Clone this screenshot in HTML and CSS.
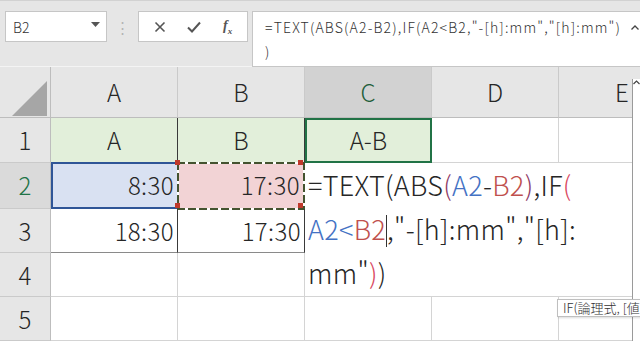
FILE: index.html
```html
<!doctype html>
<html lang="ja">
<head>
  <meta charset="UTF-8">
  <title>Excel TEXT ABS</title>
  <link rel="stylesheet" href="styles.css">
</head>
<body>
  <div class="app">
    <div class="toolbar">
      <div class="namebox">
        <span>B2</span>
        <svg class="drop" width="9" height="5" viewBox="0 0 9 5"><path d="M0 0H9L4.5 5Z" fill="#555"/></svg>
      </div>
      <div class="grip">⋮</div>
      <div class="btnbox">
        <svg class="ico" width="12" height="12" viewBox="0 0 12 12"><path d="M1.5 1.5L10.5 10.5M10.5 1.5L1.5 10.5" stroke="#555" stroke-width="1.6"/></svg>
        <svg class="ico" width="14" height="12" viewBox="0 0 14 12"><path d="M1 6.5L5 10.5L13 1.5" stroke="#555" stroke-width="2" fill="none"/></svg>
        <span class="fx"><i>f</i><sub>x</sub></span>
      </div>
      <div class="formula">
        <div>=TEXT(ABS(A2-B2),IF(A2&lt;B2,"-[h]:mm","[h]:mm")</div>
        <div>)</div>
        <svg class="caret" width="8" height="5" viewBox="0 0 8 5"><path d="M0.5 4.5L4 1L7.5 4.5" stroke="#444" stroke-width="1.3" fill="none"/></svg>
      </div>
    </div>

    <div class="sheet">
      <div class="corner"><svg width="35" height="35" viewBox="0 0 35 35"><path d="M35 0V35H0Z" fill="#a6a6a6"/></svg></div>
      <div class="colhead">A</div>
      <div class="colhead">B</div>
      <div class="colhead sel">C</div>
      <div class="colhead">D</div>
      <div class="colhead">E</div>

      <div class="rowhead">1</div>
      <div class="cell head tb">A</div>
      <div class="cell head tb">B</div>
      <div class="cell head tb active">A-B</div>
      <div class="cell"></div>
      <div class="cell"></div>

      <div class="rowhead sel">2</div>
      <div class="cell num tb ref-a">8:30</div>
      <div class="cell num tb ref-b">17:30<i class="ants"></i></div>
      <div class="editor">
        <div>=TEXT(ABS<span class="p">(</span><span class="a">A2</span>-<span class="b">B2</span><span class="p">)</span>,IF<span class="r">(</span></div>
        <div><span class="a">A2&lt;</span><span class="b">B2</span><span class="cur"></span>,"-[h]:mm","[h]:</div>
        <div>mm"<span class="r">)</span>)</div>
      </div>

      <div class="rowhead">3</div>
      <div class="cell num tb">18:30</div>
      <div class="cell num tb">17:30</div>

      <div class="rowhead">4</div>
      <div class="cell"></div>
      <div class="cell"></div>

      <div class="rowhead">5</div>
      <div class="cell"></div>
      <div class="cell"></div>
      <div class="cell"></div>
      <div class="cell"></div>
      <div class="cell"></div>

      <div class="vbar"><svg width="7" height="5" viewBox="0 0 7 5"><path d="M0.5 4L3.5 1L6.5 4" stroke="#444" stroke-width="1.2" fill="none"/></svg></div>
      <div class="tip">IF(論理式, [値が真の場合]</div>
    </div>
  </div>
</body>
</html>
```

FILE: styles.css
```css
*{
  box-sizing: border-box;
}
body{
  margin: 0;
  width: 640px;
  height: 343px;
  overflow: hidden;
  background: #ffffff;
  font-family: "Noto Sans CJK JP", "Noto Sans", sans-serif;
  font-weight: 300;
  color: #262626;
}
.app{
  width: 640px;
  height: 343px;
  overflow: hidden;
}

/* ---------- top bar ---------- */
.toolbar{
  height: 67px;
  background: #e6e6e6;
  border-top: 1px solid #d2d2d2;
  border-bottom: 1px solid #f4f4f4;
  display: flex;
  align-items: flex-start;
  padding-top: 10px;
  padding-left: 5px;
}
.namebox{
  width: 102px;
  height: 31px;
  background: #fff;
  border: 1px solid #c6c6c6;
  display: flex;
  align-items: center;
  justify-content: space-between;
  padding: 0 6px 0 7px;
  font-size: 14px;
  color: #333;
}
.drop{
  margin-top: -4px;
}
.grip{
  width: 31px;
  text-align: center;
  line-height: 31px;
  color: #b4b4b4;
  font-size: 15px;
}
.btnbox{
  width: 110px;
  height: 31px;
  background: #fff;
  border: 1px solid #c6c6c6;
  display: flex;
  align-items: center;
  justify-content: space-around;
  padding: 0 4px;
}
.fx{
  font-family: "Liberation Serif", serif;
  font-size: 14px;
  color: #555;
  font-weight: bold;
}
.fx sub{
  font-size: 9px;
  font-style: italic;
}
.formula{
  position: relative;
  margin-left: 4px;
  flex: 1;
  height: 56px;
  background: #fff;
  border: 1px solid #c6c6c6;
  border-right: none;
  padding: 3px 0 0 12px;
  font-size: 14px;
  letter-spacing: 1.15px;
  line-height: 24px;
  color: #333;
  white-space: nowrap;
}
.caret{
  position: absolute;
  right: 1px;
  top: 13px;
}

/* ---------- sheet ---------- */
.sheet{
  position: relative;
  display: grid;
  grid-template-columns: 51px 127px 127px 127px 127px 127px;
  grid-template-rows: 51px 45px 46px 44px 44px 44px;
  width: 686px;
}
.corner{
  background: #e6e6e6;
  border-right: 1px solid #bdbdbd;
  border-bottom: 1px solid #bdbdbd;
  padding: 14px 0 0 12px;
}
.colhead{
  background: #e6e6e6;
  border-right: 1px solid #cacaca;
  border-bottom: 1px solid #bdbdbd;
  text-align: center;
  font-size: 24px;
  line-height: 50px;
}
.colhead.sel{
  background: #d2d2d2;
  color: #1e5e3a;
}
.rowhead{
  background: #e6e6e6;
  border-right: 1px solid #bdbdbd;
  border-bottom: 1px solid #cacaca;
  text-align: center;
  font-size: 24px;
  line-height: 44px;
}
.rowhead.sel{
  background: #dadada;
  color: #217346;
}
.cell{
  position: relative;
  border-right: 1px solid #d4d4d4;
  border-bottom: 1px solid #d4d4d4;
  font-size: 24px;
  line-height: 43px;
}
.cell.tb{
  border-right-color: #3a3a3a;
  border-bottom-color: #8a8a8a;
}
.cell.head{
  background: #e2efda;
  text-align: center;
}
.cell.num{
  text-align: right;
  padding-right: 3px;
  letter-spacing: 0.4px;
}
.cell.active{
  border: 2px solid #217346;
  line-height: 40px;
}
.ref-a{
  background: #d9e1f2;
  border-top: 2px solid #2f5597;
  border-bottom: 2px solid #2f5597 !important;
  border-left: 2px solid #2f5597;
  margin-top: -1px;
  line-height: 42px;
}
.ref-b{
  background: #f2d3d5;
  border: none !important;
  margin-top: -1px;
  padding-right: 5px !important;
  line-height: 46px;
}
/* marching ants round the copied cell */
.ants{
  position: absolute;
  top: 0;
  left: -1px;
  right: 0;
  bottom: -1px;
  background:
    repeating-linear-gradient(90deg, #44532f 0 8px, #fff 8px 11px) top / 100% 2px no-repeat,
    repeating-linear-gradient(90deg, #44532f 0 8px, #fff 8px 11px) bottom / 100% 2px no-repeat,
    repeating-linear-gradient(180deg, #44532f 0 8px, #fff 8px 11px) left / 2px 100% no-repeat,
    repeating-linear-gradient(180deg, #44532f 0 8px, #fff 8px 11px) right / 2px 100% no-repeat;
}
.ants::before{
  content: "";
  position: absolute;
  width: 5px;
  height: 5px;
  background: #c0392b;
  top: -2px;
  left: -2px;
  box-shadow: 123px 0 0 #c0392b, 0 43px 0 #c0392b, 123px 43px 0 #c0392b;
}
.editor{
  grid-column: 4 / 7;
  grid-row: 3 / 6;
  background: #fff;
  border-bottom: 1px solid #d4d4d4;
  padding-left: 3px;
  font-size: 27px;
  letter-spacing: 0.3px;
  line-height: 44px;
  white-space: nowrap;
  color: #262626;
}
.editor .a{
  color: #4472c4;
}
.editor .b{
  color: #c0504d;
}
.editor .p{
  color: #8e3a66;
}
.editor .r{
  color: #d9475f;
}
.cur{
  display: inline-block;
  width: 1px;
  height: 32px;
  background: #333;
  vertical-align: -7px;
}
.vbar{
  position: absolute;
  left: 632px;
  top: 12px;
  width: 10px;
  bottom: 0;
  background: #fff;
  border-left: 1px solid #9a9a9a;
  padding: 1px 0 0 0;
}
.vbar svg{
  display: block;
}
.tip{
  position: absolute;
  left: 557px;
  top: 232px;
  height: 18px;
  background: #fff;
  border: 1px solid #bfbfbf;
  box-shadow: 1px 1px 2px rgba(0,0,0,0.15);
  font-size: 13px;
  line-height: 16px;
  padding: 0 5px;
  white-space: nowrap;
  color: #333;
}
```
